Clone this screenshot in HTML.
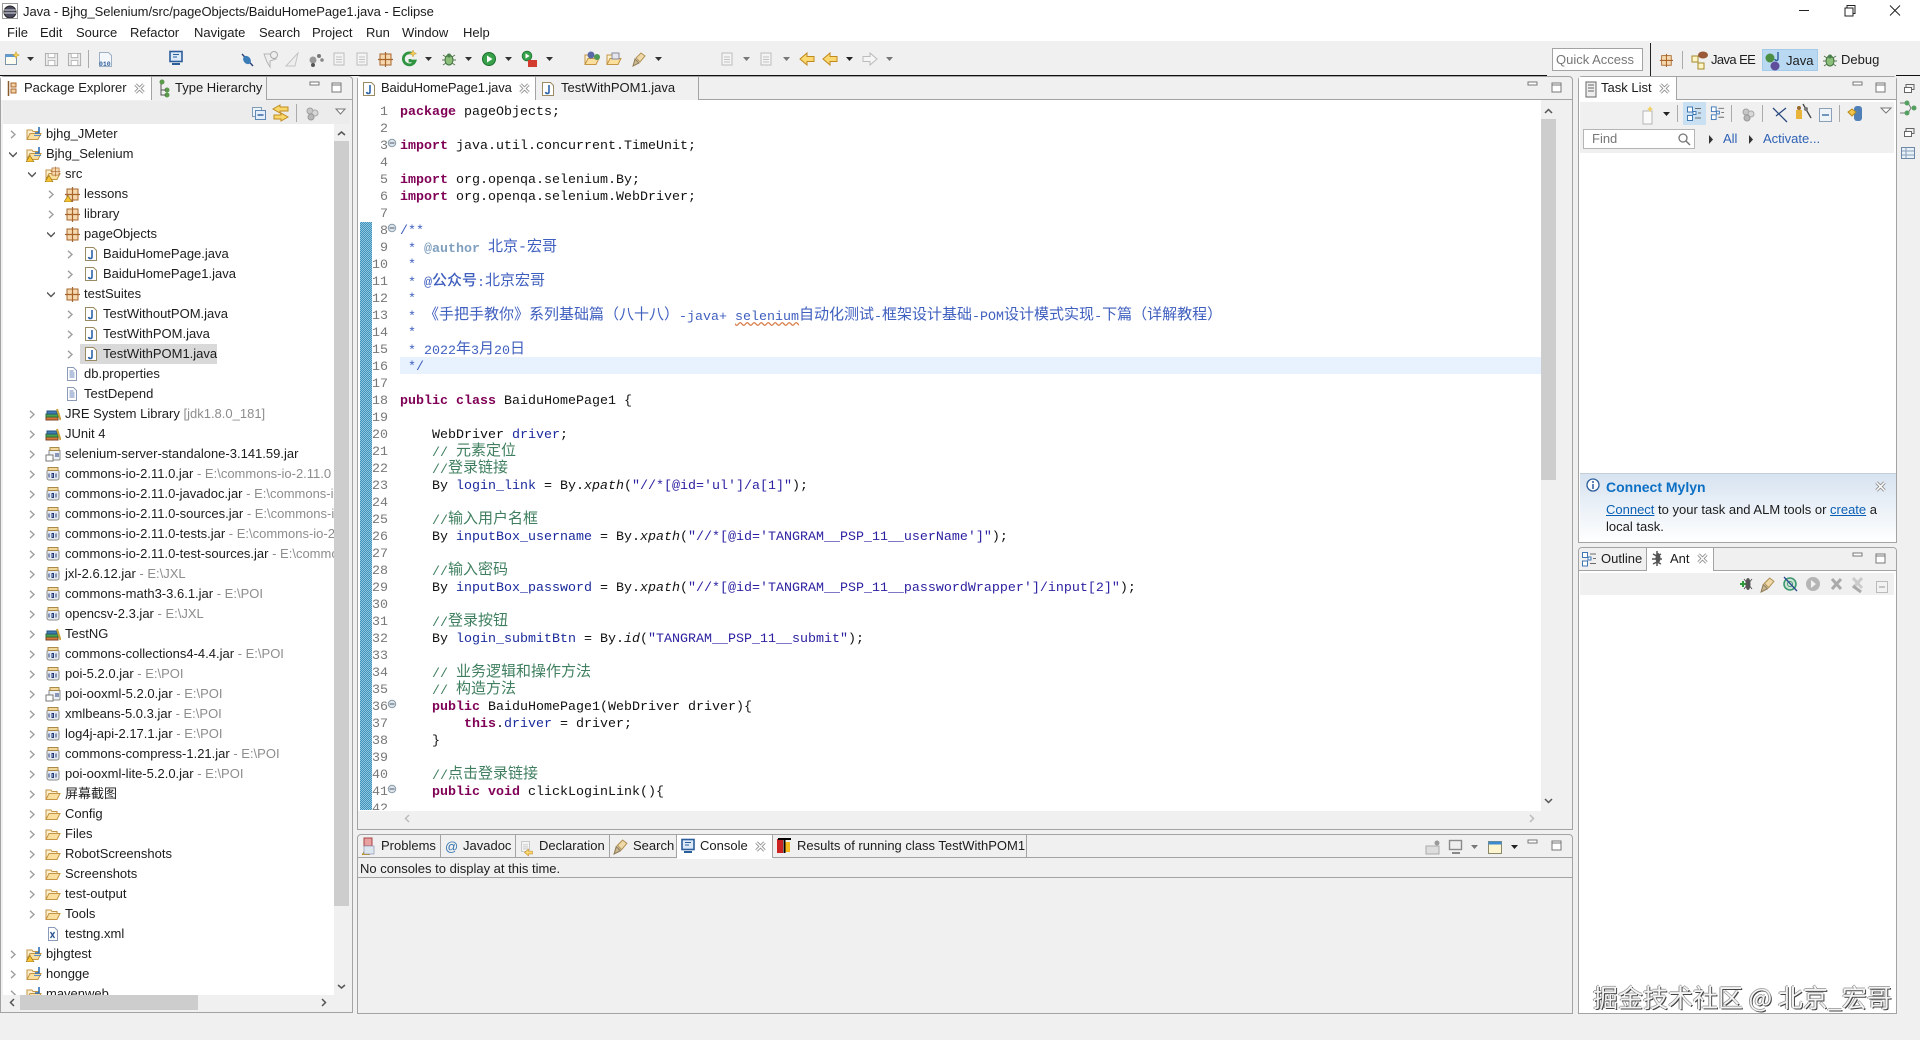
<!DOCTYPE html>
<html lang="zh"><head><meta charset="utf-8"><title>Java - Bjhg_Selenium/src/pageObjects/BaiduHomePage1.java - Eclipse</title>
<style>
html,body{margin:0;padding:0;background:#f0f0f0}
body{width:1920px;height:1040px;overflow:hidden;position:relative;font:13px/20px "Liberation Sans","Noto Sans CJK SC",sans-serif;color:#1c1c1c}
.a{position:absolute;white-space:nowrap}
.p{position:absolute;box-sizing:border-box;border:1px solid #a3a3a3;border-radius:4px 4px 0 0;background:#f0f0f0}
.ln{position:absolute;background:#a3a3a3;height:1px}
.tab{position:absolute;box-sizing:border-box;height:23px;border-right:1px solid #a3a3a3;line-height:22px;white-space:nowrap}
.w{background:#fff}
#tree{position:absolute;left:3px;top:124px;width:331px;height:871px;overflow:hidden;background:#fff}
.r{position:relative;height:20px;line-height:20px;white-space:nowrap}
.r svg{position:absolute;top:2px;width:16px;height:16px}
.r svg.o{top:6px;width:8px;height:9px}
.r b{font-weight:400;color:#8d8d8d}
.r span{position:absolute}
.L0 span{left:43px}.L0 svg.o{left:6px}.L0 svg.i{left:23px}
.L1 span{left:62px}.L1 svg.o{left:25px}.L1 svg.i{left:42px}
.L2 span{left:81px}.L2 svg.o{left:44px}.L2 svg.i{left:61px}
.L3 span{left:100px}.L3 svg.o{left:63px}.L3 svg.i{left:80px}
#code{position:absolute;left:358px;top:100px;width:1183px;height:710px;background:#fff;overflow:hidden;font:13.33px/17px "Liberation Mono","Noto Sans CJK SC",monospace;color:#111}
#nums{position:absolute;left:0;top:4px;width:30px;text-align:right;color:#787878}
#nums div{height:17px}
#src{position:absolute;left:42px;top:4px;width:1141px}
#src div{height:17px;line-height:17px;white-space:pre}
.k{color:#7f0055;font-weight:700}.c{color:#3f7f5f}.d{color:#3f5fbf}.t{color:#7f9fbf;font-weight:700}.s{color:#2a1fa0}.f{color:#1a2a9c}
i{font-style:normal;font-size:15px;position:relative;top:-1px}
em{font-style:italic}
a{color:#0a5fb4;text-decoration:underline}
</style></head><body>
<div class="a w" style="left:0;top:0;width:1920px;height:41px"></div>
<div class="a" style="left:23px;top:2px;letter-spacing:-.05px">Java - Bjhg_Selenium/src/pageObjects/BaiduHomePage1.java - Eclipse</div>
<div class="a" style="left:7px;top:23px">File</div><div class="a" style="left:40px;top:23px">Edit</div><div class="a" style="left:76px;top:23px">Source</div><div class="a" style="left:130px;top:23px">Refactor</div><div class="a" style="left:194px;top:23px">Navigate</div><div class="a" style="left:259px;top:23px">Search</div><div class="a" style="left:312px;top:23px">Project</div><div class="a" style="left:366px;top:23px">Run</div><div class="a" style="left:402px;top:23px">Window</div><div class="a" style="left:463px;top:23px">Help</div>
<div class="a" style="left:0;top:75px;width:1547px;height:1px;background:#111"></div>
<div class="a" style="left:1896px;top:75px;width:24px;height:1px;background:#111"></div>
<div class="a" style="left:1650px;top:43px;width:1px;height:33px;background:#222"></div>
<div class="a" style="left:1552px;top:48px;width:91px;height:23px;box-sizing:border-box;border:1px solid #a3a3a3;background:#fff;color:#777;padding-left:3px;line-height:21px">Quick Access</div>
<div class="a" style="left:1762px;top:49px;width:56px;height:22px;background:#b9d9f2;border:1px solid #a5cbe8;box-sizing:border-box"></div>
<div class="a" style="left:1711px;top:50px;letter-spacing:-.6px">Java EE</div><div class="a" style="left:1786px;top:51px">Java</div><div class="a" style="left:1841px;top:50px">Debug</div>

<!-- Left panel -->
<div class="p" style="left:0;top:76px;width:353px;height:937px"></div>
<div class="tab w" style="left:1px;top:77px;width:151px;padding-left:23px">Package Explorer</div>
<div class="tab" style="left:152px;top:77px;width:115px;padding-left:23px">Type Hierarchy</div>
<div class="ln" style="left:267px;top:99px;width:85px"></div>
<div class="a" style="left:3px;top:101px;width:347px;height:23px;background:#ececec"></div>
<div id="tree">
<div class="r L0"><svg class="o"><use href="#o"/></svg><svg class="i"><use href="#pj"/></svg><span>bjhg_JMeter</span></div>
<div class="r L0"><svg class="o"><use href="#v"/></svg><svg class="i"><use href="#pj"/><use href="#wn"/></svg><span>Bjhg_Selenium</span></div>
<div class="r L1"><svg class="o"><use href="#v"/></svg><svg class="i"><use href="#fo"/><use href="#pk2"/><use href="#wn"/></svg><span>src</span></div>
<div class="r L2"><svg class="o"><use href="#o"/></svg><svg class="i"><use href="#pk"/><use href="#wn"/></svg><span>lessons</span></div>
<div class="r L2"><svg class="o"><use href="#o"/></svg><svg class="i"><use href="#pk"/></svg><span>library</span></div>
<div class="r L2"><svg class="o"><use href="#v"/></svg><svg class="i"><use href="#pk"/></svg><span>pageObjects</span></div>
<div class="r L3"><svg class="o"><use href="#o"/></svg><svg class="i"><use href="#jf"/></svg><span>BaiduHomePage.java</span></div>
<div class="r L3"><svg class="o"><use href="#o"/></svg><svg class="i"><use href="#jf"/></svg><span>BaiduHomePage1.java</span></div>
<div class="r L2"><svg class="o"><use href="#v"/></svg><svg class="i"><use href="#pk"/></svg><span>testSuites</span></div>
<div class="r L3"><svg class="o"><use href="#o"/></svg><svg class="i"><use href="#jf"/></svg><span>TestWithoutPOM.java</span></div>
<div class="r L3"><svg class="o"><use href="#o"/></svg><svg class="i"><use href="#jf"/></svg><span>TestWithPOM.java</span></div>
<div class="r L3"><div class="a" style="left:77px;top:0;width:137px;height:20px;background:#d9d9d9"></div><svg class="o"><use href="#o"/></svg><svg class="i"><use href="#jf"/></svg><span>TestWithPOM1.java</span></div>
<div class="r L2"><svg class="i"><use href="#tx"/></svg><span>db.properties</span></div>
<div class="r L2"><svg class="i"><use href="#tx"/></svg><span>TestDepend</span></div>
<div class="r L1"><svg class="o"><use href="#o"/></svg><svg class="i"><use href="#lb"/></svg><span>JRE System Library <b>[jdk1.8.0_181]</b></span></div>
<div class="r L1"><svg class="o"><use href="#o"/></svg><svg class="i"><use href="#lb"/></svg><span>JUnit 4</span></div>
<div class="r L1"><svg class="o"><use href="#o"/></svg><svg class="i"><use href="#js"/></svg><span>selenium-server-standalone-3.141.59.jar</span></div>
<div class="r L1"><svg class="o"><use href="#o"/></svg><svg class="i"><use href="#jr"/></svg><span>commons-io-2.11.0.jar <b>- E:\commons-io-2.11.0</b></span></div>
<div class="r L1"><svg class="o"><use href="#o"/></svg><svg class="i"><use href="#jr"/></svg><span>commons-io-2.11.0-javadoc.jar <b>- E:\commons-io-2.11.0</b></span></div>
<div class="r L1"><svg class="o"><use href="#o"/></svg><svg class="i"><use href="#jr"/></svg><span>commons-io-2.11.0-sources.jar <b>- E:\commons-io-2.11.0</b></span></div>
<div class="r L1"><svg class="o"><use href="#o"/></svg><svg class="i"><use href="#jr"/></svg><span>commons-io-2.11.0-tests.jar <b>- E:\commons-io-2.11.0</b></span></div>
<div class="r L1"><svg class="o"><use href="#o"/></svg><svg class="i"><use href="#jr"/></svg><span>commons-io-2.11.0-test-sources.jar <b>- E:\commons-io-2.11.0</b></span></div>
<div class="r L1"><svg class="o"><use href="#o"/></svg><svg class="i"><use href="#jr"/></svg><span>jxl-2.6.12.jar <b>- E:\JXL</b></span></div>
<div class="r L1"><svg class="o"><use href="#o"/></svg><svg class="i"><use href="#jr"/></svg><span>commons-math3-3.6.1.jar <b>- E:\POI</b></span></div>
<div class="r L1"><svg class="o"><use href="#o"/></svg><svg class="i"><use href="#jr"/></svg><span>opencsv-2.3.jar <b>- E:\JXL</b></span></div>
<div class="r L1"><svg class="o"><use href="#o"/></svg><svg class="i"><use href="#lb"/></svg><span>TestNG</span></div>
<div class="r L1"><svg class="o"><use href="#o"/></svg><svg class="i"><use href="#jr"/></svg><span>commons-collections4-4.4.jar <b>- E:\POI</b></span></div>
<div class="r L1"><svg class="o"><use href="#o"/></svg><svg class="i"><use href="#jr"/></svg><span>poi-5.2.0.jar <b>- E:\POI</b></span></div>
<div class="r L1"><svg class="o"><use href="#o"/></svg><svg class="i"><use href="#js"/></svg><span>poi-ooxml-5.2.0.jar <b>- E:\POI</b></span></div>
<div class="r L1"><svg class="o"><use href="#o"/></svg><svg class="i"><use href="#jr"/></svg><span>xmlbeans-5.0.3.jar <b>- E:\POI</b></span></div>
<div class="r L1"><svg class="o"><use href="#o"/></svg><svg class="i"><use href="#jr"/></svg><span>log4j-api-2.17.1.jar <b>- E:\POI</b></span></div>
<div class="r L1"><svg class="o"><use href="#o"/></svg><svg class="i"><use href="#jr"/></svg><span>commons-compress-1.21.jar <b>- E:\POI</b></span></div>
<div class="r L1"><svg class="o"><use href="#o"/></svg><svg class="i"><use href="#jr"/></svg><span>poi-ooxml-lite-5.2.0.jar <b>- E:\POI</b></span></div>
<div class="r L1"><svg class="o"><use href="#o"/></svg><svg class="i"><use href="#fo"/></svg><span>屏幕截图</span></div>
<div class="r L1"><svg class="o"><use href="#o"/></svg><svg class="i"><use href="#fo"/></svg><span>Config</span></div>
<div class="r L1"><svg class="o"><use href="#o"/></svg><svg class="i"><use href="#fo"/></svg><span>Files</span></div>
<div class="r L1"><svg class="o"><use href="#o"/></svg><svg class="i"><use href="#fo"/></svg><span>RobotScreenshots</span></div>
<div class="r L1"><svg class="o"><use href="#o"/></svg><svg class="i"><use href="#fo"/></svg><span>Screenshots</span></div>
<div class="r L1"><svg class="o"><use href="#o"/></svg><svg class="i"><use href="#fo"/></svg><span>test-output</span></div>
<div class="r L1"><svg class="o"><use href="#o"/></svg><svg class="i"><use href="#fo"/></svg><span>Tools</span></div>
<div class="r L1"><svg class="i"><use href="#xm"/></svg><span>testng.xml</span></div>
<div class="r L0"><svg class="o"><use href="#o"/></svg><svg class="i"><use href="#pj"/><use href="#wn"/></svg><span>bjhgtest</span></div>
<div class="r L0"><svg class="o"><use href="#o"/></svg><svg class="i"><use href="#pj"/></svg><span>hongge</span></div>
<div class="r L0"><svg class="o"><use href="#o"/></svg><svg class="i"><use href="#pj"/></svg><span>mavenweb</span></div>
</div>
<div class="a" style="left:334px;top:141px;width:15px;height:765px;background:#cdcdcd"></div>
<div class="a" style="left:20px;top:995px;width:178px;height:15px;background:#cdcdcd"></div>

<!-- Editor -->
<div class="p" style="left:357px;top:76px;width:1216px;height:754px"></div>
<div class="ln" style="left:699px;top:99px;width:873px"></div>
<div class="tab w" style="left:358px;top:77px;width:178px;padding-left:23px;letter-spacing:-.12px">BaiduHomePage1.java</div>
<div class="tab" style="left:536px;top:77px;width:163px;padding-left:25px">TestWithPOM1.java</div>
<div class="a" style="left:358px;top:100px;width:1183px;height:711px;background:#fff"></div>
<div class="a" style="left:1541px;top:119px;width:15px;height:361px;background:#cdcdcd"></div>
<div id="code">
<div class="a" style="left:42px;top:257px;width:1141px;height:17px;background:#e8f2fe"></div>
<div class="a" style="left:2px;top:122px;width:12px;height:588px;background-color:#fff;background-image:conic-gradient(#3f93bd 25%,#8fc6de 0 50%,#3f93bd 0 75%,#8fc6de 0);background-size:2px 2px"></div>
<div id="nums"><div>1</div><div>2</div><div>3</div><div>4</div><div>5</div><div>6</div><div>7</div><div>8</div><div>9</div><div>10</div><div>11</div><div>12</div><div>13</div><div>14</div><div>15</div><div>16</div><div>17</div><div>18</div><div>19</div><div>20</div><div>21</div><div>22</div><div>23</div><div>24</div><div>25</div><div>26</div><div>27</div><div>28</div><div>29</div><div>30</div><div>31</div><div>32</div><div>33</div><div>34</div><div>35</div><div>36</div><div>37</div><div>38</div><div>39</div><div>40</div><div>41</div><div>42</div></div>
<div id="src">
<div><span class="k">package</span> pageObjects;</div>
<div> </div>
<div><span class="k">import</span> java.util.concurrent.TimeUnit;</div>
<div> </div>
<div><span class="k">import</span> org.openqa.selenium.By;</div>
<div><span class="k">import</span> org.openqa.selenium.WebDriver;</div>
<div> </div>
<div class="d">/**</div>
<div class="d"> * <span class="t">@author</span> <i>北京-宏哥</i></div>
<div class="d"> *</div>
<div class="d"> * @<i style="font-weight:500">公众号</i>:<i>北京宏哥</i></div>
<div class="d"> *</div>
<div class="d"> * <i>《手把手教你》系列基础篇（八十八）</i>-java+ <span style="text-decoration:underline wavy #d9824f">selenium</span><i>自动化测试</i>-<i>框架设计基础</i>-POM<i>设计模式实现</i>-<i>下篇（详解教程）</i></div>
<div class="d"> *</div>
<div class="d"> * 2022<i>年</i>3<i>月</i>20<i>日</i></div>
<div class="d"> */</div>
<div> </div>
<div><span class="k">public</span> <span class="k">class</span> BaiduHomePage1 {</div>
<div> </div>
<div>    WebDriver <span class="f">driver</span>;</div>
<div class="c">    // <i>元素定位</i></div>
<div class="c">    //<i>登录链接</i></div>
<div>    By <span class="f">login_link</span> = By.<em>xpath</em>(<span class="s">"//*[@id='ul']/a[1]"</span>);</div>
<div> </div>
<div class="c">    //<i>输入用户名框</i></div>
<div>    By <span class="f">inputBox_username</span> = By.<em>xpath</em>(<span class="s">"//*[@id='TANGRAM__PSP_11__userName']"</span>);</div>
<div> </div>
<div class="c">    //<i>输入密码</i></div>
<div>    By <span class="f">inputBox_password</span> = By.<em>xpath</em>(<span class="s">"//*[@id='TANGRAM__PSP_11__passwordWrapper']/input[2]"</span>);</div>
<div> </div>
<div class="c">    //<i>登录按钮</i></div>
<div>    By <span class="f">login_submitBtn</span> = By.<em>id</em>(<span class="s">"TANGRAM__PSP_11__submit"</span>);</div>
<div> </div>
<div class="c">    // <i>业务逻辑和操作方法</i></div>
<div class="c">    // <i>构造方法</i></div>
<div>    <span class="k">public</span> BaiduHomePage1(WebDriver driver){</div>
<div>        <span class="k">this</span>.<span class="f">driver</span> = driver;</div>
<div>    }</div>
<div> </div>
<div class="c">    //<i>点击登录链接</i></div>
<div>    <span class="k">public</span> <span class="k">void</span> clickLoginLink(){</div>
<div> </div>
</div>
</div>

<!-- Console -->
<div class="p" style="left:357px;top:834px;width:1216px;height:180px"></div>
<div class="ln" style="left:358px;top:857px;width:319px"></div>
<div class="ln" style="left:773px;top:857px;width:799px"></div>
<div class="ln" style="left:358px;top:877px;width:1214px"></div>
<div class="a w" style="left:677px;top:835px;width:96px;height:24px;background:#fff"></div>
<div class="tab" style="left:358px;top:835px;width:83px;padding-left:23px">Problems</div>
<div class="tab" style="left:441px;top:835px;width:75px;padding-left:22px">Javadoc</div>
<div class="tab" style="left:516px;top:835px;width:94px;padding-left:23px">Declaration</div>
<div class="tab" style="left:610px;top:835px;width:67px;padding-left:23px">Search</div>
<div class="tab" style="left:677px;top:835px;width:96px;padding-left:23px">Console</div>
<div class="tab" style="left:773px;top:835px;width:254px;padding-left:24px">Results of running class TestWithPOM1</div>
<div class="a" style="left:360px;top:859px">No consoles to display at this time.</div>

<!-- Task list -->
<div class="p" style="left:1578px;top:76px;width:319px;height:467px;background:#fff"></div>
<div class="a" style="left:1579px;top:77px;width:317px;height:23px;background:#f0f0f0"></div>
<div class="ln" style="left:1677px;top:99px;width:219px"></div>
<div class="tab w" style="left:1579px;top:77px;width:98px;padding-left:22px">Task List</div>
<div class="a" style="left:1580px;top:102px;width:314px;height:51px;background:#f0f0f0"></div>
<div class="a" style="left:1683px;top:102px;width:23px;height:23px;background:#c9e0f3"></div>
<div class="a" style="left:1583px;top:129px;width:112px;height:20px;box-sizing:border-box;border:1px solid #b5b5b5;background:#fff;color:#777;padding-left:8px;line-height:18px">Find</div>
<div class="a" style="left:1723px;top:129px;color:#2f62b5">All</div>
<div class="a" style="left:1763px;top:129px;color:#2f62b5">Activate...</div>
<div class="a" style="left:1580px;top:473px;width:316px;height:69px;background:linear-gradient(#d7e3f0,#fff);border-top:1px solid #c4ced8;box-sizing:border-box"></div>
<div class="a" style="left:1606px;top:477px;font-weight:700;font-size:14px;color:#0c6fc4">Connect Mylyn</div>
<div class="a" style="left:1606px;top:500px"><a>Connect</a> to your task and ALM tools or <a>create</a> a</div>
<div class="a" style="left:1606px;top:517px">local task.</div>

<!-- Outline / Ant -->
<div class="p" style="left:1578px;top:547px;width:319px;height:467px;background:#fff"></div>
<div class="a" style="left:1579px;top:548px;width:317px;height:22px;background:#f0f0f0;border-radius:3px 3px 0 0"></div>
<div class="ln" style="left:1714px;top:570px;width:182px"></div>
<div class="ln" style="left:1579px;top:570px;width:68px"></div>
<div class="tab" style="left:1579px;top:548px;width:68px;padding-left:22px;height:22px">Outline</div>
<div class="tab w" style="left:1647px;top:548px;width:67px;padding-left:23px">Ant</div>
<div class="a" style="left:1580px;top:573px;width:314px;height:22px;background:#f0f0f0"></div>

<!-- Watermark -->
<div class="a" style="left:1593px;top:982px;font:25px/30px 'Noto Sans CJK SC','WenQuanYi Zen Hei',sans-serif;color:#f4f4f4;text-shadow:1px 1px 0 #444,-1px 0 0 #999,0 -1px 0 #aaa">掘金技术社区 @ 北京_宏哥</div>

<!-- Icon overlay -->
<svg class="a" style="left:0;top:0;pointer-events:none" width="1920" height="1040" viewBox="0 0 1920 1040" xmlns="http://www.w3.org/2000/svg">
<defs>
<symbol id="o" viewBox="0 0 8 9"><path d="M2 .8 6 4.500 2 8.200" fill="none" stroke="#a0a0a0" stroke-width="1.400"/></symbol>
<symbol id="v" viewBox="0 0 8 9"><path d="M0 2.500 4 6.500 8 2.500" fill="none" stroke="#555" stroke-width="1.400"/></symbol>
<symbol id="pk" viewBox="0 0 16 16"><rect x="3" y="3" width="11" height="11" fill="#f6d8ae" stroke="#a8652b"/><path d="M8.500 1v15M1 8.500h15" stroke="#a8652b" fill="none" stroke-width="1.200"/></symbol>
<symbol id="pk2" viewBox="0 0 16 16"><g transform="translate(5 0) scale(.65)"><rect x="3" y="3" width="11" height="11" fill="#f6d8ae" stroke="#a8652b"/><path d="M8.500 1v15M1 8.500h15" stroke="#a8652b" fill="none"/></g></symbol>
<symbol id="jf" viewBox="0 0 16 16"><path d="M2.500 1.500h8l3 3v10h-11z" fill="#fff" stroke="#9a8a62"/><path d="M9 4v7c0 2-3 2-3.500 0" fill="none" stroke="#2b64a8" stroke-width="1.600"/></symbol>
<symbol id="jr" viewBox="0 0 16 16"><rect x="2" y="4" width="12" height="10" rx="2" fill="#e4ebf2" stroke="#8b8b8b"/><rect x="3" y="1.500" width="10" height="3" fill="#f2d89a" stroke="#a98a48"/><path d="M4 7.500v4M7 7.500h1.500v4h-1.500zM11 7.500v4" stroke="#223a78" fill="none" stroke-width="1"/></symbol>
<symbol id="js" viewBox="0 0 16 16"><rect x="4" y="4" width="11" height="10" rx="1" fill="#eef2f6" stroke="#8b8b8b"/><rect x="5" y="1.500" width="9" height="3" fill="#f2d89a" stroke="#a98a48"/><rect x="1" y="9" width="7" height="6" fill="#fff" stroke="#777"/><path d="M11 7v4M13 7v4" stroke="#223a78"/></symbol>
<symbol id="fo" viewBox="0 0 16 16"><path d="M1 13V4h5l1 1.500h5v2" fill="#fdf0cf" stroke="#c39544"/><path d="M1 13.500 4 7.500h11l-3 6z" fill="#fbdf9f" stroke="#c39544"/></symbol>
<symbol id="pj" viewBox="0 0 16 16"><path d="M1 13V4h5l1 1.500h5v2" fill="#fdf0cf" stroke="#c39544"/><path d="M1 13.500 4 7.500h11l-3 6z" fill="#fbdf9f" stroke="#c39544"/><path d="M13 1v6H9" fill="none" stroke="#2f6fb5" stroke-width="1.600"/><path d="M8 9.500h7" stroke="#5b8fc7"/></symbol>
<symbol id="wn" viewBox="0 0 16 16"><path d="M4 9.500 8 16H0z" fill="#f6c333" stroke="#9a7412" stroke-width=".7"/></symbol>
<symbol id="lb" viewBox="0 0 16 16"><rect x="1" y="11" width="12" height="3" fill="#d8763a" stroke="#7e4320"/><rect x="1" y="8" width="12" height="3" fill="#49a34f" stroke="#2e6b33"/><rect x="2" y="5" width="10" height="3" fill="#3f7fb5" stroke="#27527a"/><path d="M12 3l3.500 11" stroke="#caa237" stroke-width="2"/></symbol>
<symbol id="tx" viewBox="0 0 16 16"><path d="M3.500 1.500h6l3 3v10h-9z" fill="#fff" stroke="#8a9ab8"/><path d="M5.500 5h4M5.500 7h5M5.500 9h5M5.500 11h5" stroke="#6a86bd"/></symbol>
<symbol id="xm" viewBox="0 0 16 16"><path d="M3.500 1.500h6l3 3v10h-9z" fill="#fff" stroke="#8a9ab8"/><path d="M5.500 6l4 6M9.500 6l-4 6" stroke="#24508f" stroke-width="1.300"/></symbol>
<symbol id="mn" viewBox="0 0 12 6"><rect x="1" y="1" width="9" height="3" fill="#fff" stroke="#777"/></symbol>
<symbol id="mx" viewBox="0 0 12 12"><rect x="1" y="1" width="9" height="9" fill="#fff" stroke="#777"/><path d="M1 3h9" stroke="#777"/></symbol>
<symbol id="cx" viewBox="0 0 11 11"><path d="M1.500 1.500l8 8M9.500 1.500l-8 8" stroke="#8c8c8c" stroke-width="3.200"/><path d="M1.500 1.500l8 8M9.500 1.500l-8 8" stroke="#fff" stroke-width="1.500"/></symbol>
<symbol id="nw" viewBox="0 0 16 16"><path d="M1.500 3.500h11v10h-11z" fill="#fdfcf0" stroke="#7d93a8"/><path d="M1.500 3.500h11v2.500h-11z" fill="#5b9bd5"/><path d="M12 .500l1 2.500 2.500 1-2.500 1-1 2.500-1-2.500-2.500-1 2.500-1z" fill="#f3cf5a" stroke="#c69a2a" stroke-width=".5"/></symbol>
<symbol id="sv" viewBox="0 0 16 16"><path d="M1.500 1.500h13v13h-13z" fill="#ececec" stroke="#a9a9a9"/><path d="M4.500 2v4h7V2M4.500 14V9h7v5" fill="#fff" stroke="#b5b5b5"/></symbol>
<symbol id="mo" viewBox="0 0 16 16"><rect x="2" y="1.500" width="12" height="10" fill="#dbe9f8" stroke="#2b5d9b" stroke-width="1.600"/><path d="M5 4.500h6M5 7h4" stroke="#2b5d9b"/><path d="M4 14h8" stroke="#2b5d9b" stroke-width="2"/></symbol>
<symbol id="gr" viewBox="0 0 16 16"><circle cx="6" cy="6" r="3" fill="#c7c7c7" stroke="#a0a0a0"/><circle cx="11" cy="8" r="3" fill="#d7d7d7" stroke="#a8a8a8"/><circle cx="7" cy="12" r="3" fill="#b7b7b7" stroke="#999"/></symbol>
<symbol id="ds" viewBox="0 0 16 16"><path d="M3 2h10v12H3z" fill="#f4f4f4" stroke="#bdbdbd"/><path d="M5 6h6M5 8.500h6M5 11h6" stroke="#c2c2c2"/></symbol>
<symbol id="gn" viewBox="0 0 16 16"><circle cx="8" cy="8" r="6.500" fill="#37a24a" stroke="#1d7030"/><path d="M6 4.500v7l5.500-3.500z" fill="#fff"/></symbol>
<symbol id="bg" viewBox="0 0 16 16"><ellipse cx="8" cy="9" rx="4" ry="5" fill="#8bbf7a" stroke="#3d6f3d"/><path d="M2 4l3 2M14 4l-3 2M1 9h3M15 9h-3M2 14l3-2M14 14l-3-2" stroke="#55774f"/><circle cx="8" cy="4.500" r="2" fill="#4b7f4b"/></symbol>
<symbol id="ar" viewBox="0 0 16 16"><path d="M15 5.500H8V2L1 8l7 6v-3.500h7z" fill="#fcd871" stroke="#c08a1e"/></symbol>
<symbol id="ag" viewBox="0 0 16 16"><path d="M1 5.500h7V2l7 6-7 6v-3.500H1z" fill="#f5f5f5" stroke="#bbb"/></symbol>
<symbol id="pn" viewBox="0 0 16 16"><path d="M2 15l2-7 4 4z" fill="#c9b893" stroke="#8f7c55"/><path d="M5 7l5-5 4 3-5 6z" fill="#f0d9a8" stroke="#b19357"/></symbol>
<symbol id="ol" viewBox="0 0 16 16"><rect x="1.500" y="1.500" width="5" height="5" fill="#fff" stroke="#3f77b5"/><rect x="1.500" y="10" width="5" height="5" fill="#fff" stroke="#3f77b5"/><rect x="7" y="6" width="3" height="3" fill="#fff" stroke="#3f77b5"/><path d="M9 3h6M12 7.500h3M9 12.500h6" stroke="#6b6b6b"/></symbol>
</defs>
<!-- Window -->
<circle cx="10" cy="12" r="6" fill="#4a4a5e" stroke="#222"/><path d="M4 10h12M4 13h12" stroke="#ddd"/>
<rect x="2.500" y="3.500" width="15" height="15" fill="none" stroke="#999"/>
<path d="M1799 10.500h10" stroke="#222"/>
<rect x="1845" y="8" width="8" height="8" fill="#fff" stroke="#222"/><path d="M1847 8V5.500h8v8h-2" fill="none" stroke="#222"/>
<path d="M1890 5.500l10 10M1900 5.500l-10 10" stroke="#222"/>
<!-- Main toolbar -->
<use href="#nw" x="4" y="51" width="16" height="16"/><path d="M27 57h7l-3.500 4z" fill="#333"/>
<use href="#sv" x="44" y="52" width="15" height="15"/><use href="#sv" x="67" y="52" width="15" height="15"/>
<path d="M88.500 50v18" stroke="#aaa"/>
<path d="M99.500 52.500h9l3 3v11h-12z" fill="#f4f7fb" stroke="#9fb0c4"/><text x="99" y="66" font-family="Liberation Mono" font-size="6.500" font-weight="700" fill="#2f5f9a">010</text>
<use href="#mo" x="168" y="50" width="16" height="16"/>
<path d="M242 54l11 12" stroke="#223a70" stroke-width="1.300"/><ellipse cx="247" cy="60" rx="3.500" ry="4.500" fill="#3a7cb8" transform="rotate(-40 247 60)"/>
<path d="M264 54h9l3 5-6 2v6l-3-5z" fill="#eee" stroke="#b5b5b5"/><circle cx="274" cy="55" r="3.500" fill="#eee" stroke="#aaa"/>
<path d="M286 66l12-13-3 13z" fill="#eee" stroke="#c4c4c4"/>
<circle cx="313" cy="60" r="3.500" fill="#999"/><circle cx="319" cy="56" r="2" fill="#777"/><circle cx="313" cy="65" r="2" fill="#555"/><circle cx="322" cy="60" r="1.800" fill="#888"/>
<use href="#ds" x="331" y="51" width="16" height="16"/><use href="#ds" x="354" y="51" width="16" height="16"/>
<use href="#pk" x="377" y="51" width="16" height="16"/>
<path d="M414 55a6 6 0 1 0 1 6h-5v-2" fill="none" stroke="#2e9440" stroke-width="2.800"/><path d="M413 50l1 2.500 2.500 1-2.500 1-1 2.500-1-2.500-2.500-1 2.500-1z" fill="#f3cf5a" stroke="#c69a2a" stroke-width=".5"/>
<path d="M425 57h7l-3.500 4z" fill="#333"/>
<use href="#bg" x="441" y="51" width="16" height="16"/><path d="M465 57h7l-3.500 4z" fill="#333"/>
<use href="#gn" x="481" y="51" width="16" height="16"/><path d="M505 57h7l-3.500 4z" fill="#333"/>
<use href="#gn" x="521" y="50" width="12" height="12"/><rect x="528" y="60" width="9" height="7" fill="#d43b2f"/><path d="M546 57h7l-3.500 4z" fill="#333"/>
<use href="#fo" x="584" y="51" width="16" height="16"/><circle cx="591" cy="55" r="3.500" fill="#5a6aa8"/><circle cx="597" cy="57" r="3" fill="#4f9a55"/>
<use href="#fo" x="606" y="51" width="16" height="16"/><rect x="612" y="53" width="7" height="6" fill="#e6e6ef" stroke="#8a8a9a"/>
<use href="#pn" x="631" y="51" width="16" height="16"/><path d="M655 57h7l-3.500 4z" fill="#333"/>
<use href="#ds" x="719" y="51" width="16" height="16"/><path d="M743 57h7l-3.500 4z" fill="#777"/>
<use href="#ds" x="758" y="51" width="16" height="16"/><path d="M783 57h7l-3.500 4z" fill="#777"/>
<use href="#ar" x="799" y="51" width="16" height="16"/>
<use href="#ar" x="822" y="51" width="16" height="16"/><path d="M846 57h7l-3.500 4z" fill="#222"/>
<use href="#ag" x="862" y="51" width="16" height="16"/><path d="M886 57h7l-3.500 4z" fill="#777"/>
<!-- Perspectives -->
<use href="#pk" x="1659" y="53" width="14" height="14"/><path d="M1682.500 51v18" stroke="#aaa"/>
<rect x="1692" y="56" width="6" height="6" fill="#fff4c4" stroke="#a58a2a"/><rect x="1698" y="63" width="6" height="6" fill="#fff4c4" stroke="#a58a2a"/><ellipse cx="1703" cy="55" rx="5" ry="3.500" fill="#9a5a3a"/>
<circle cx="1770" cy="58" r="4.500" fill="#4d8f42"/><circle cx="1775" cy="66" r="4.500" fill="#5e4e9b"/><path d="M1778 52v7c0 2-3 2-3 0" fill="none" stroke="#2b5d9b" stroke-width="1.400"/>
<use href="#bg" x="1822" y="52" width="16" height="16"/>
<!-- Package explorer tabs -->
<path d="M8.500 81v15" stroke="#8a5a2a" stroke-width="1.500"/><path d="M11 83h5v4h-5zM11 89h5v4h-5z" fill="#f3d2a4" stroke="#a8652b"/>
<circle cx="162" cy="82" r="2.500" fill="#5a9a4a"/><circle cx="167" cy="90" r="2.500" fill="#5a9a4a"/><circle cx="167" cy="95" r="2.500" fill="#5a9a4a"/><path d="M161 84v11h5M161 90h5" stroke="#555" fill="none"/>
<use href="#cx" x="134" y="83" width="11" height="11"/>
<use href="#mn" x="309" y="81" width="12" height="6"/><use href="#mx" x="331" y="82" width="12" height="12"/>
<rect x="252.500" y="107.500" width="9" height="9" fill="#eef4fa" stroke="#7f9cb8"/><rect x="255.500" y="110.500" width="10" height="9" fill="#e4effa" stroke="#5f88b5"/><path d="M257.500 115h6" stroke="#2b5d9b" stroke-width="1.400"/>
<path d="M280 105l-7 4 7 4v-2h8v-4h-8zM281 121l7-4-7-4v2h-7v4h7z" fill="#f9d76a" stroke="#c08a1e"/>
<path d="M296.500 104v18" stroke="#aaa"/><use href="#gr" x="304" y="105" width="16" height="16"/>
<path d="M336 109h9l-4.500 5z" fill="#fff" stroke="#777"/>
<!-- Left scroll arrows -->
<path d="M338 135l3.500-3 3.500 3M338 985l3.500 3 3.500-3" fill="none" stroke="#555" stroke-width="1.500"/>
<path d="M14 999l-3.500 3.500 3.500 3.500" fill="none" stroke="#555" stroke-width="1.500"/><path d="M322 999l3.500 3.500-3.500 3.500" fill="none" stroke="#555" stroke-width="1.500"/>
<!-- Editor -->
<use href="#jf" x="361" y="81" width="16" height="16"/><use href="#cx" x="519" y="83" width="11" height="11"/>
<use href="#jf" x="540" y="81" width="16" height="16"/>
<use href="#mn" x="1527" y="81" width="12" height="6"/><use href="#mx" x="1551" y="82" width="12" height="12"/>
<g fill="#dbe6ee" stroke="#8a9aa8"><circle cx="392" cy="143" r="3.700"/><circle cx="392" cy="228" r="3.700"/><circle cx="392" cy="704" r="3.700"/><circle cx="392" cy="789" r="3.700"/></g>
<path d="M389.500 143h5M389.500 228h5M389.500 704h5M389.500 789h5" stroke="#556"/>
<path d="M1545 113l3.500-3.500 3.500 3.500M1545 799l3.500 3.500 3.500-3.500" fill="none" stroke="#555" stroke-width="1.500"/>
<path d="M409 815l-3.500 3.500 3.500 3.500M1530 815l3.500 3.500-3.500 3.500" fill="none" stroke="#bbb" stroke-width="1.500"/>
<!-- Console tabs -->
<use href="#wn" x="362" y="840" width="15" height="15"/><rect x="364" y="838" width="8" height="8" fill="#e8a0a0" stroke="#a44"/><rect x="364" y="846" width="10" height="8" fill="#dce6ef" stroke="#88a" stroke-width=".6"/>
<text x="445" y="851" font-family="Liberation Sans" font-size="13" fill="#3574b0">@</text>
<use href="#ds" x="519" y="838" width="13" height="17"/><use href="#ar" x="524" y="848" width="9" height="9"/>
<use href="#pn" x="612" y="838" width="17" height="17"/>
<use href="#mo" x="680" y="838" width="16" height="16"/><use href="#cx" x="755" y="841" width="11" height="11"/>
<rect x="777" y="839" width="6" height="14" fill="#c22"/><rect x="784" y="842" width="6" height="10" fill="#f2b81d"/><path d="M778 839h13M784.500 839v14" stroke="#000" stroke-width="2"/>
<path d="M1426 846h13v8h-13z" fill="#ddd" stroke="#aaa"/><circle cx="1437" cy="843" r="2.500" fill="#999"/>
<rect x="1449.500" y="840.500" width="12" height="9" fill="#eee" stroke="#8a8a8a" stroke-width="1.400"/><path d="M1452 853h8" stroke="#888" stroke-width="2"/><path d="M1471 845h7l-3.500 4z" fill="#777"/>
<rect x="1488.500" y="841.500" width="13" height="12" fill="#fdf4d0" stroke="#8a8a6a"/><rect x="1488.500" y="841.500" width="13" height="3" fill="#3d8ad0"/><path d="M1511 845h7l-3.500 4z" fill="#222"/>
<use href="#mn" x="1527" y="839" width="12" height="6"/><use href="#mx" x="1551" y="840" width="12" height="12"/>
<!-- Task list -->
<rect x="1586" y="82" width="10" height="15" fill="#eee" stroke="#666"/><path d="M1588 85h6M1588 88h6M1588 91h6" stroke="#666"/>
<use href="#cx" x="1659" y="83" width="11" height="11"/>
<use href="#mn" x="1852" y="81" width="12" height="6"/><use href="#mx" x="1875" y="82" width="12" height="12"/>
<path d="M1643 111h9v13h-9z" fill="#fafafa" stroke="#b5b5b5"/><path d="M1650 106l1 2 2 1-2 1-1 2-1-2-2-1 2-1z" fill="#f3cf5a"/>
<path d="M1663 112h7l-3.500 4z" fill="#222"/><path d="M1677.500 105v17M1731.500 105v17M1762.500 105v17M1839.500 105v17" stroke="#aaa"/>
<use href="#ol" x="1686" y="105" width="16" height="17"/><use href="#ol" x="1710" y="105" width="15" height="16"/>
<use href="#gr" x="1740" y="106" width="16" height="16"/>
<path d="M1773 108l14 14M1786 108l-10 8" stroke="#2b4a80" stroke-width="1.300"/>
<circle cx="1799" cy="108" r="2" fill="#9a6a2a"/><rect x="1796" y="110" width="6" height="9" fill="#e8b43a"/><path d="M1803 104l8 14" stroke="#444" stroke-width="1.300"/><circle cx="1806" cy="109" r="2" fill="#777"/>
<rect x="1819.500" y="108.500" width="12" height="13" fill="#eef3f8" stroke="#8aa0b8"/><path d="M1822 115h7" stroke="#3a6ea5" stroke-width="1.400"/>
<rect x="1854" y="106" width="8" height="15" rx="3" fill="#4f80b8"/><path d="M1848 112l4-3 4 3-4 4z" fill="#f2c54d" stroke="#b88a1e"/>
<path d="M1881 108h10l-5 5z" fill="#fff" stroke="#777"/>
<circle cx="1683" cy="138" r="4" fill="#fff" stroke="#777" stroke-width="1.300"/><path d="M1686 141l4 4" stroke="#777" stroke-width="1.500"/>
<path d="M1709 135v9l4-4.500zM1749 135v9l4-4.500z" fill="#333"/>
<!-- Mylyn -->
<circle cx="1593" cy="485" r="6" fill="#fff" stroke="#2b5d9b" stroke-width="1.300"/><path d="M1593 484v5M1593 481v2" stroke="#2b5d9b" stroke-width="1.500"/>
<use href="#cx" x="1875" y="481" width="11" height="11"/>
<!-- Outline / Ant -->
<use href="#ol" x="1581" y="551" width="16" height="16"/>
<path d="M1657 551v15M1653 554l4 2 4-2M1652 559h10M1653 564l4-2 4 2" stroke="#555" stroke-width="1.500" fill="none"/><ellipse cx="1658" cy="558" rx="2.500" ry="5" fill="#555"/>
<use href="#cx" x="1697" y="553" width="11" height="11"/>
<use href="#mn" x="1852" y="552" width="12" height="6"/><use href="#mx" x="1875" y="553" width="12" height="12"/>
<path d="M1740 584h6M1743 581v6" stroke="#2f9a3a" stroke-width="2"/><ellipse cx="1748" cy="584" rx="2.500" ry="6" fill="#555"/><path d="M1744 579l8 10M1752 579l-8 10" stroke="#555"/>
<use href="#pn" x="1759" y="576" width="17" height="17"/>
<circle cx="1790" cy="584" r="6" fill="#cfe3d5" stroke="#3e9a70" stroke-width="1.600"/><circle cx="1790" cy="584" r="2.500" fill="none" stroke="#3e9a70"/><path d="M1784 577l13 14" stroke="#2b4a90" stroke-width="1.300"/>
<circle cx="1813" cy="584" r="7" fill="#b5b5b5"/><path d="M1811 580v8l5-4z" fill="#f2f2f2"/>
<path d="M1832 579l9 10M1841 579l-9 10" stroke="#aaa" stroke-width="3"/>
<path d="M1853 578l9 10M1862 578l-9 10" stroke="#ccc" stroke-width="3"/><path d="M1853 586l8 6" stroke="#aaa" stroke-width="3"/>
<rect x="1876.500" y="581.500" width="11" height="11" fill="#f2f2f2" stroke="#bbb"/><path d="M1879 587h6" stroke="#aaa" stroke-width="1.300"/>
<!-- Right trim -->
<rect x="1904.500" y="87.500" width="7" height="5" fill="#fff" stroke="#666"/><path d="M1906 87v-2.500h8v5h-2" fill="none" stroke="#666"/>
<path d="M1900 103h8M1900 113h8M1908 103l3 5M1908 113l3-5" stroke="#777"/><circle cx="1907" cy="103" r="2.500" fill="#55a060"/><circle cx="1907" cy="113" r="2.500" fill="#55a060"/><circle cx="1914" cy="108" r="2.500" fill="#55a060"/>
<rect x="1904.500" y="131.500" width="7" height="5" fill="#fff" stroke="#666"/><path d="M1906 131v-2.500h8v5h-2" fill="none" stroke="#666"/>
<rect x="1901.500" y="147.500" width="13" height="11" fill="#e8f0f8" stroke="#6f88a8"/><path d="M1902 151h12M1902 155h12M1906 148v10" stroke="#8aa0b8"/>
</svg>
</body></html>
